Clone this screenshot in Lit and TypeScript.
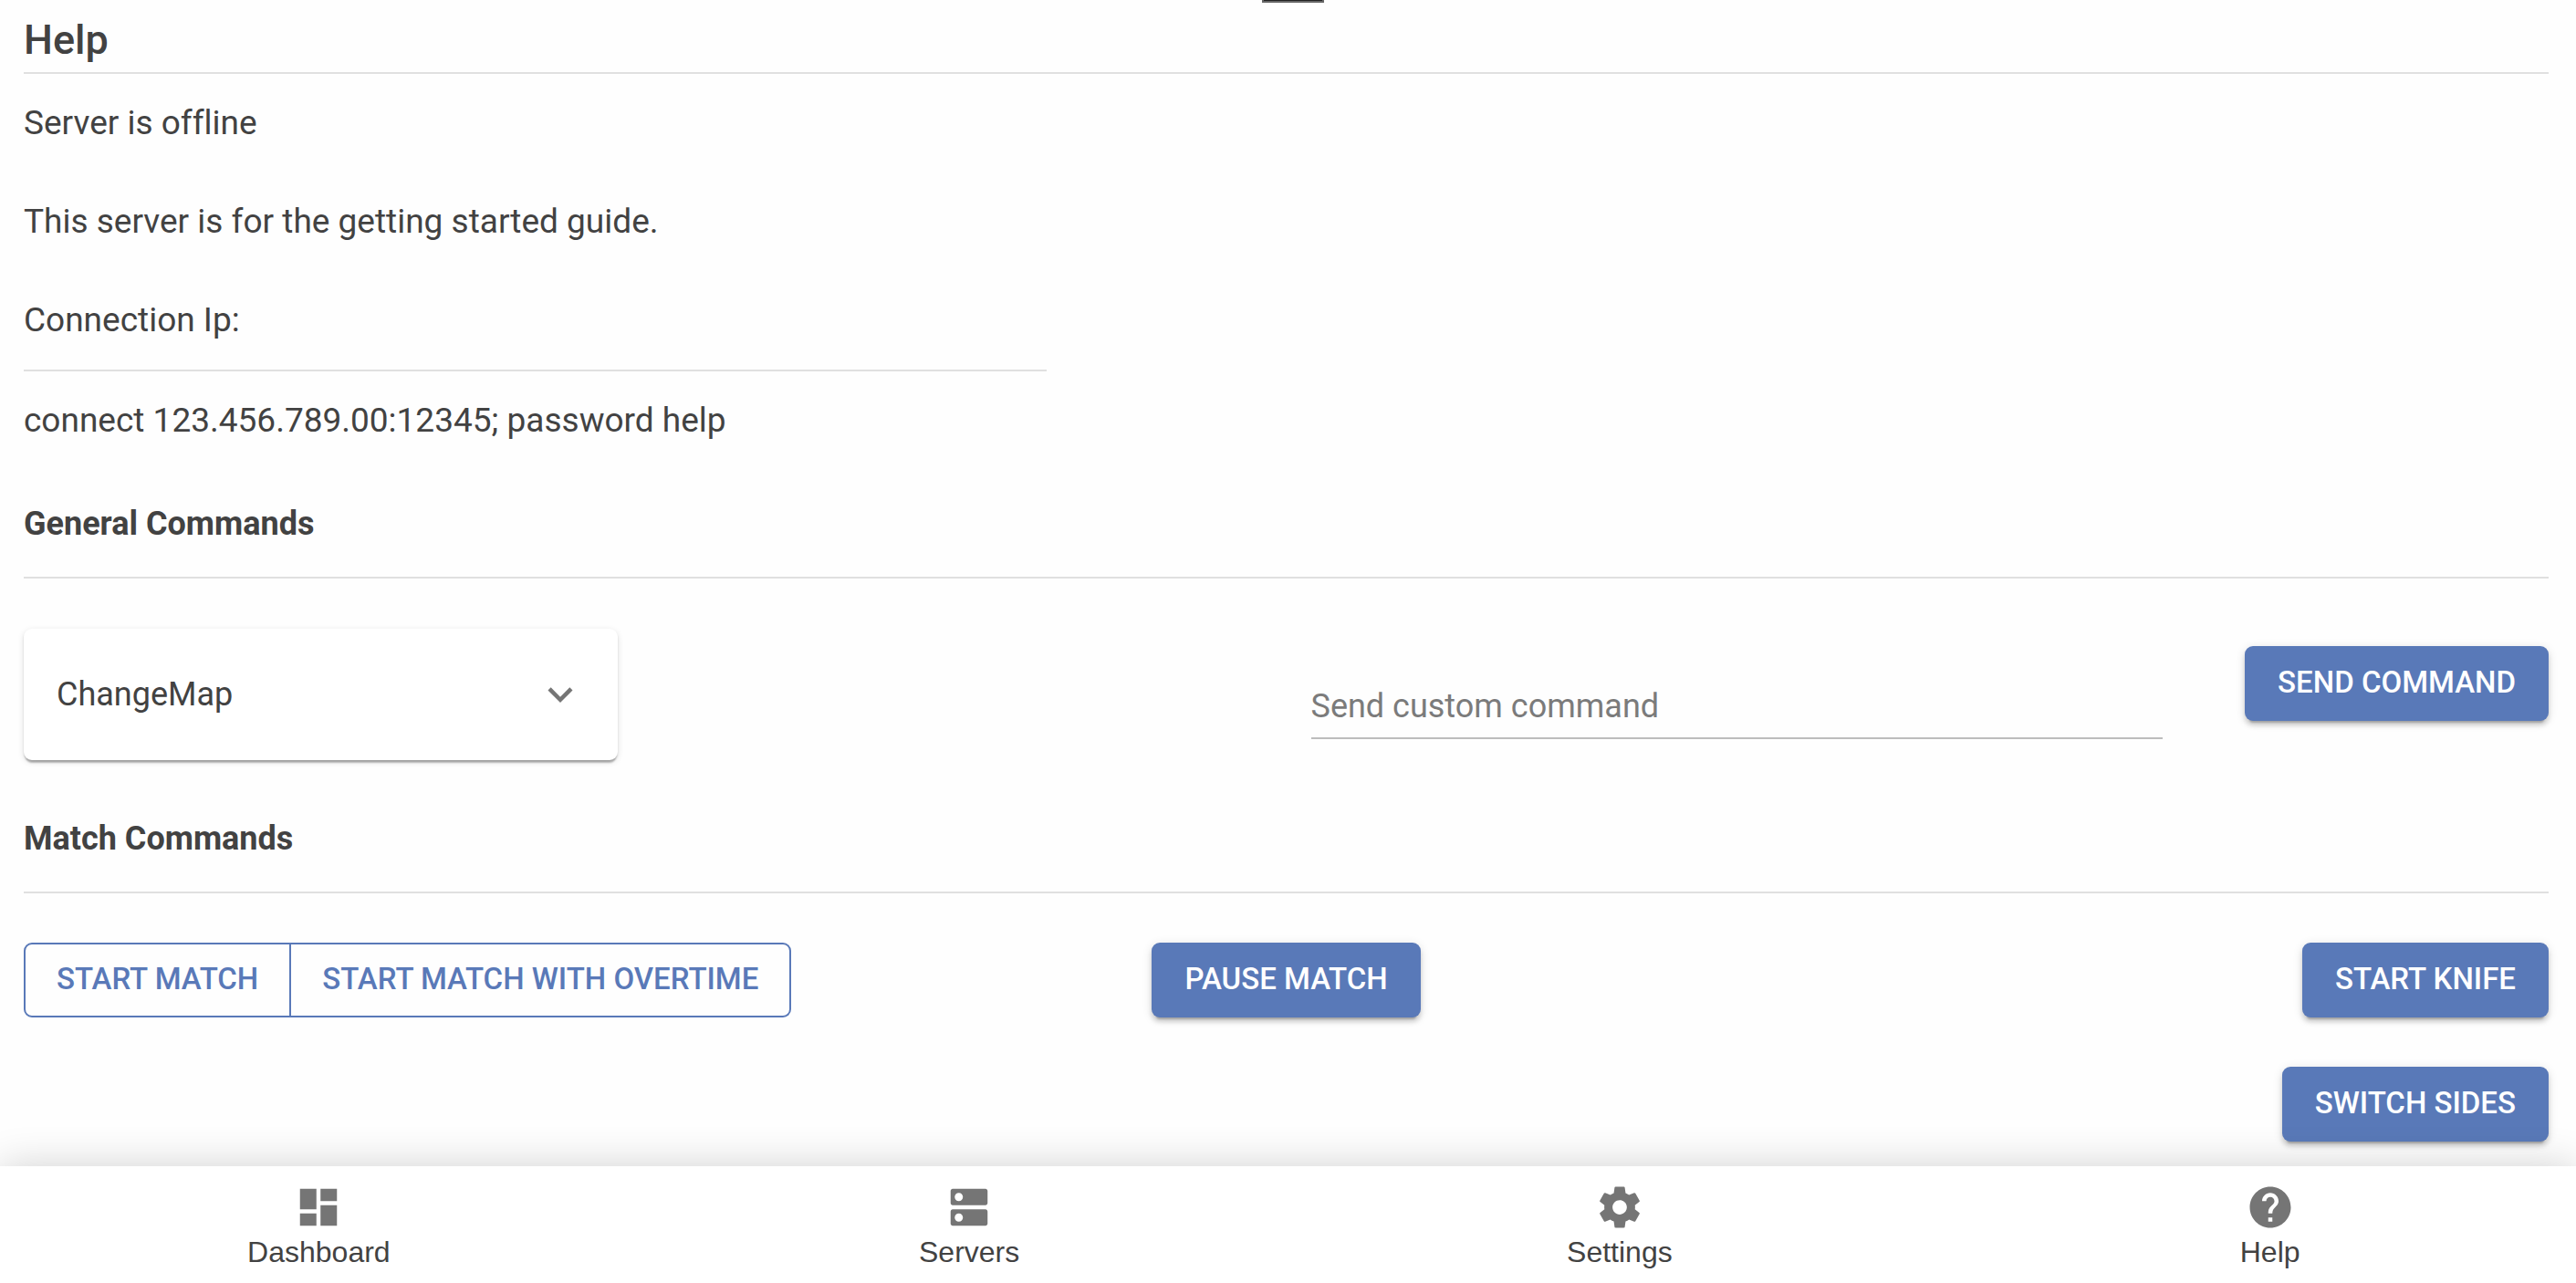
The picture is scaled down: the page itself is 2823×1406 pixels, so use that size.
import { LitElement, html, css, svg } from "lit";
import { customElement, property } from "lit/decorators.js";

const ICONS = {
  expand: "M16.59 8.59 12 13.17 7.41 8.59 6 10l6 6 6-6z",
  dashboard: "M3 13h8V3H3v10zm0 8h8v-6H3v6zm10 0h8V11h-8v10zm0-18v6h8V3h-8z",
  servers:
    "M20 13H4c-.55 0-1 .45-1 1v6c0 .55.45 1 1 1h16c.55 0 1-.45 1-1v-6c0-.55-.45-1-1-1zM7 19c-1.100 0-2-.9-2-2s.9-2 2-2 2 .9 2 2-.9 2-2 2zM20 3H4c-.55 0-1 .45-1 1v6c0 .55.45 1 1 1h16c.55 0 1-.45 1-1V4c0-.55-.45-1-1-1zM7 9c-1.100 0-2-.9-2-2s.9-2 2-2 2 .9 2 2-.9 2-2 2z",
  settings:
    "M19.43 12.98c.04-.32.07-.64.07-.98s-.03-.66-.07-.98l2.110-1.650c.19-.15.24-.42.12-.64l-2-3.460c-.12-.22-.39-.3-.61-.22l-2.490 1c-.52-.4-1.080-.73-1.690-.98l-.38-2.650C14.460 2.180 14.250 2 14 2h-4c-.25 0-.46.18-.49.42l-.38 2.650c-.61.25-1.170.59-1.690.98l-2.490-1c-.23-.09-.49 0-.61.22l-2 3.460c-.13.22-.07.49.12.64l2.110 1.650c-.04.32-.07.65-.07.98s.03.66.07.98l-2.110 1.650c-.19.15-.24.42-.12.64l2 3.460c.12.22.39.3.61.22l2.490-1c.52.4 1.080.73 1.690.98l.38 2.650c.03.24.24.42.49.42h4c.25 0 .46-.18.49-.42l.38-2.650c.61-.25 1.170-.59 1.690-.98l2.490 1c.23.09.49 0 .61-.22l2-3.460c.12-.22.07-.49-.12-.64l-2.110-1.650zM12 15.500c-1.930 0-3.500-1.570-3.500-3.500s1.570-3.500 3.500-3.500 3.500 1.570 3.500 3.500-1.570 3.500-3.500 3.500z",
  help: "M12 2C6.480 2 2 6.480 2 12s4.480 10 10 10 10-4.480 10-10S17.520 2 12 2zm1 17h-2v-2h2v2zm2.070-7.750-.9.920C13.450 12.900 13 13.500 13 15h-2v-.5c0-1.100.45-2.100 1.170-2.830l1.240-1.260c.37-.36.59-.86.59-1.410 0-1.100-.9-2-2-2s-2 .9-2 2H8c0-2.210 1.790-4 4-4s4 1.790 4 4c0 .88-.36 1.680-.93 2.250z",
};

type IconName = keyof typeof ICONS;

@customElement("ui-icon")
export class UiIcon extends LitElement {
  @property() name: IconName = "help";

  static styles = css`
    :host {
      display: block;
      width: 54px;
      height: 54px;
      color: #757575;
    }
    .glyph {
      display: block;
      width: 100%;
      height: 100%;
      fill: currentColor;
    }
  `;

  render() {
    return html`<svg class="glyph" viewBox="0 0 24 24" aria-hidden="true">
      ${svg`<path d=${ICONS[this.name]}></path>`}
    </svg>`;
  }
}

@customElement("bottom-nav")
export class BottomNav extends LitElement {
  static styles = css`
    :host {
      display: block;
      background: #ffffff;
      box-shadow: 0 0 45px rgba(0, 0, 0, 0.18);
    }
    .bar {
      display: grid;
      grid-template-columns: repeat(4, 1fr);
      margin: 0 -21px 0 -7px;
    }
    .item {
      display: flex;
      flex-direction: column;
      align-items: center;
      padding: 18px 0 12px;
      color: #424242;
      text-decoration: none;
      font: 400 32px/44px "Liberation Sans", Arial, sans-serif;
    }
  `;

  private items: { icon: IconName; label: string }[] = [
    { icon: "dashboard", label: "Dashboard" },
    { icon: "servers", label: "Servers" },
    { icon: "settings", label: "Settings" },
    { icon: "help", label: "Help" },
  ];

  render() {
    return html`<nav class="bar">
      ${this.items.map(
        (item) => html`<a class="item" href="#${item.label.toLowerCase()}">
          <ui-icon name=${item.icon}></ui-icon>
          <span>${item.label}</span>
        </a>`
      )}
    </nav>`;
  }
}

@customElement("app-root")
export class AppRoot extends LitElement {
  static styles = css`
    :host {
      display: flex;
      flex-direction: column;
      position: relative;
      min-height: 100vh;
      overflow: hidden;
      box-sizing: border-box;
      background: #fefefe;
      color: #424242;
      font: 400 36px/54px Roboto, "Liberation Sans", sans-serif;
    }
    .notch {
      position: absolute;
      top: 0;
      left: 49%;
      width: 64px;
      height: 1px;
      background: #222222;
      border: 2px solid #666666;
      border-top: 0;
    }
    .page {
      flex: 1;
      padding: 9px 30px 27px 26px;
    }
    .title {
      margin: 0;
      font-size: 45px;
      font-weight: 500;
      line-height: 70px;
    }
    .rule {
      height: 2px;
      margin: 0;
      border: 0;
      background: #e0e0e0;
    }
    .info {
      display: flex;
      flex-direction: column;
      gap: 54px;
      padding: 27px 0;
    }
    .line,
    .address {
      margin: 0;
      font-size: 37px;
      font-variant-ligatures: none;
    }
    .connection {
      width: calc((100% + 54px) * 5 / 12 - 54px);
    }
    .address {
      padding: 27px 0 54px;
    }
    .section {
      margin: 0 0 25px;
      font-size: 36px;
      font-weight: 700;
      line-height: 65px;
    }
    .general {
      display: grid;
      grid-template-columns: 1fr 1fr;
      gap: 54px;
      padding: 55px 0 54px;
    }
    .half {
      display: grid;
      grid-template-columns: 1fr 1fr;
      gap: 54px;
    }
    .panel {
      display: flex;
      align-items: center;
      justify-content: space-between;
      height: 144px;
      padding: 0 36px;
      border: 0;
      border-radius: 9px;
      background: #ffffff;
      color: inherit;
      font: inherit;
      box-shadow: 0 5px 2px -2px rgba(0, 0, 0, 0.2), 0 2px 2px rgba(0, 0, 0, 0.14),
        0 2px 7px rgba(0, 0, 0, 0.12);
    }
    .custom {
      display: flex;
      align-items: flex-start;
      gap: 90px;
      padding-top: 19px;
    }
    .command {
      flex: 1;
      min-width: 0;
      padding: 39px 0 7px;
      border: 0;
      border-bottom: 2px solid #bdbdbd;
      border-radius: 0;
      outline: 0;
      background: transparent;
      color: inherit;
      font: inherit;
    }
    .command::placeholder {
      color: #7b7b7b;
      opacity: 1;
    }
    .match {
      display: grid;
      grid-template-columns: 1fr auto 1fr;
      align-items: start;
      padding-top: 54px;
    }
    .stack {
      display: flex;
      flex-direction: column;
      align-items: flex-end;
      gap: 54px;
    }
    .button {
      padding: 12px 36px 14px;
      border: 0;
      border-radius: 9px;
      background: #5979b8;
      color: #ffffff;
      font: 500 33px/56px Roboto, "Liberation Sans", sans-serif;
      text-transform: uppercase;
      white-space: nowrap;
      box-shadow: 0 7px 2px -5px rgba(0, 0, 0, 0.2), 0 5px 5px rgba(0, 0, 0, 0.14),
        0 2px 11px rgba(0, 0, 0, 0.12);
    }
    .group {
      display: flex;
    }
    .group .button {
      padding: 10px 34px 12px;
      border: 2px solid #5979b8;
      background: transparent;
      color: #5979b8;
      box-shadow: none;
    }
    .group .button:first-child {
      border-radius: 9px 0 0 9px;
    }
    .group .button:last-child {
      border-left: 0;
      border-radius: 0 9px 9px 0;
    }
  `;

  render() {
    return html`
      <div class="notch"></div>
      <main class="page">
        <h1 class="title">Help</h1>
        <hr class="rule" />
        <div class="info">
          <p class="line">Server is offline</p>
          <p class="line">This server is for the getting started guide.</p>
          <p class="line">Connection Ip:</p>
        </div>
        <div class="connection"><hr class="rule" /></div>
        <p class="address">connect 123.456.789.00:12345; password help</p>

        <h2 class="section">General Commands</h2>
        <hr class="rule" />
        <div class="general">
          <div class="half">
            <button class="panel" type="button" aria-expanded="false">
              <span>ChangeMap</span>
              <ui-icon name="expand"></ui-icon>
            </button>
          </div>
          <div class="custom">
            <input
              class="command"
              type="text"
              aria-label="Send custom command"
              placeholder="Send custom command"
            />
            <button class="button" type="button">Send command</button>
          </div>
        </div>

        <h2 class="section">Match Commands</h2>
        <hr class="rule" />
        <div class="match">
          <div class="group">
            <button class="button" type="button">Start match</button>
            <button class="button" type="button">Start match with overtime</button>
          </div>
          <button class="button" type="button">Pause match</button>
          <div class="stack">
            <button class="button" type="button">Start knife</button>
            <button class="button" type="button">Switch sides</button>
          </div>
        </div>
      </main>
      <bottom-nav></bottom-nav>
    `;
  }
}
